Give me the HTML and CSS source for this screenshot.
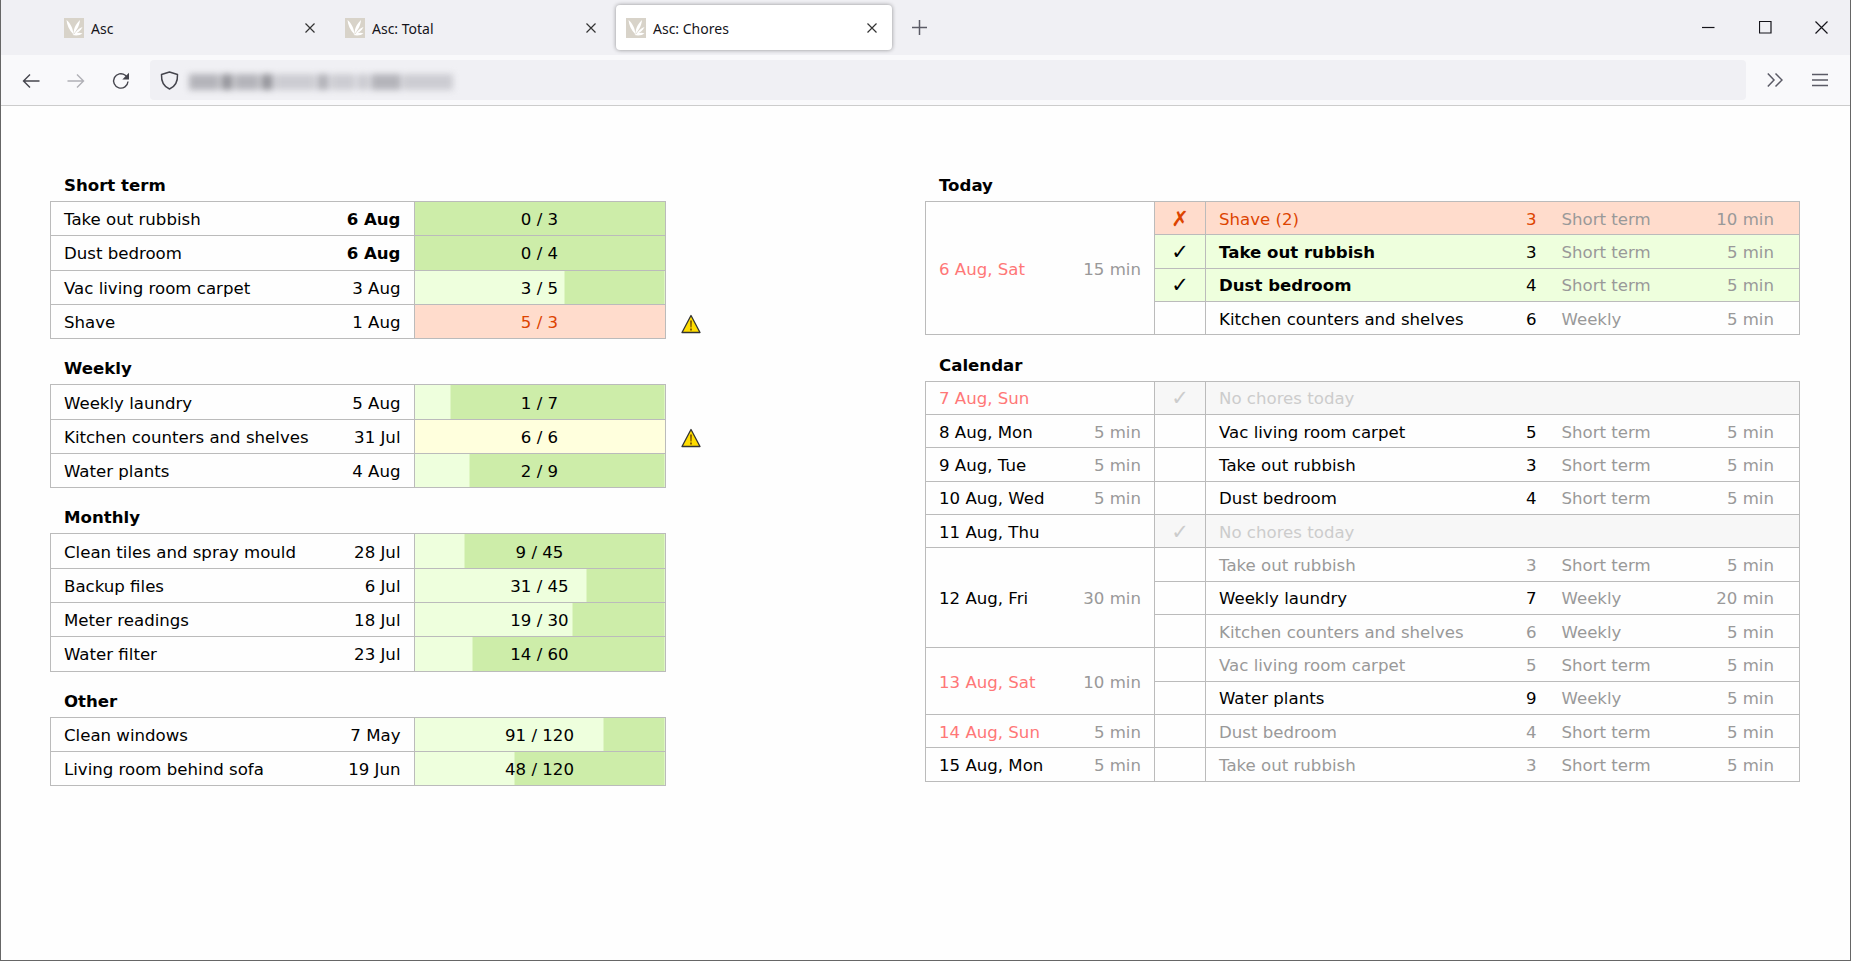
FILE: index.html
```html
<!DOCTYPE html>
<html lang="en">
<head>
  <meta charset="UTF-8" />
  <title>Asc: Chores</title>
  <link rel="stylesheet" href="styles.css">
</head>
<body>
  <svg class="defs" width="0" height="0">
    <symbol id="leaf" viewBox="0 0 20 20">
      <rect width="20" height="20" fill="#d8d3c9"/>
      <path d="M2.500 2c.5 5 2.500 10 7 14.500C9 10 6.500 5.500 2.500 2zM16 2c-3 3-6.500 7-6.500 14 3-3.500 6-8 6.500-14zM18.500 9c-3 1-6.500 4-8.500 7.500 3.500-1.500 7-4 8.500-7.500zM18.500 15.500c-3-1.500-7-.5-10 1.500 3.500 1 7.500.5 10-1.500z" fill="#fff"/>
    </symbol>
    <symbol id="warn" viewBox="0 0 20 20">
      <path d="M10 1.500 19 18.500H1z" fill="#fd0" stroke="#333" stroke-width="1.3" stroke-linejoin="round"/>
      <path d="M9.100 6.500h1.800l-.3 7h-1.200zM9.100 14.500h1.800v2H9.100z" fill="#7a5200"/>
    </symbol>
  </svg>

  <div class="window">
    <div class="tabbar">
      <div class="tab">
        <svg class="favicon"><use href="#leaf"/></svg>
        <span class="tab-title">Asc</span>
        <svg class="tab-close" viewBox="0 0 10 10"><path d="M.5.5l9 9M9.500.5l-9 9"/></svg>
      </div>
      <div class="tab">
        <svg class="favicon"><use href="#leaf"/></svg>
        <span class="tab-title">Asc: Total</span>
        <svg class="tab-close" viewBox="0 0 10 10"><path d="M.5.5l9 9M9.500.5l-9 9"/></svg>
      </div>
      <div class="tab active">
        <svg class="favicon"><use href="#leaf"/></svg>
        <span class="tab-title">Asc: Chores</span>
        <svg class="tab-close" viewBox="0 0 10 10"><path d="M.5.5l9 9M9.500.5l-9 9"/></svg>
      </div>
      <svg class="new-tab" viewBox="0 0 15 15"><path d="M7.500 0v15M0 7.500h15"/></svg>
      <div class="win-buttons">
        <svg class="win-btn" viewBox="0 0 13 13"><path d="M0 6.500h12.500"/></svg>
        <svg class="win-btn" viewBox="0 0 13 13"><path d="M.5.5h11.500v11.500H.5z"/></svg>
        <svg class="win-btn" viewBox="0 0 13 13"><path d="M.5.5l12 12M12.500.5l-12 12"/></svg>
      </div>
    </div>

    <div class="toolbar">
      <svg class="nav-icon" viewBox="0 0 18 18"><path d="M17.500 9H1.500M8 2.500 1.500 9 8 15.500"/></svg>
      <svg class="nav-icon dim" viewBox="0 0 18 18"><path d="M.5 9h16M10 2.500 16.500 9 10 15.500"/></svg>
      <svg class="nav-icon" viewBox="0 0 18 18"><path d="M16 9.500A7.200 7.200 0 1 1 13.300 3.300L15.500 5.500"/><path class="fill" d="M17 .8v6.700h-6.700z"/></svg>
      <div class="urlbar">
        <svg class="shield" viewBox="0 0 19 19"><path d="M9.500 1 17.500 3.500C17.800 10 15.500 15.500 9.500 18 3.500 15.500 1.200 10 1.500 3.500z"/></svg>
        <div class="url-blur">
          <i class="w30"></i><i class="w12 dark"></i><i class="w24"></i><i class="w12 dark"></i><i class="w40 lite"></i><i class="w12"></i><i class="w24 lite"></i><i class="w12 lite"></i><i class="w30"></i><i class="w50 lite"></i>
        </div>
      </div>
      <svg class="tool-icon" viewBox="0 0 16 16"><path d="M.8 1.500 7 8 .8 14.500M8.500 1.500 15 8 8.500 14.500"/></svg>
      <svg class="tool-icon menu" viewBox="0 0 16 14"><path d="M0 1.500h16M0 7h16M0 12.500h16"/></svg>
    </div>

    <main class="page">
      <section class="left-col">
        <h2>Short term</h2>
        <table class="chores">
          <colgroup><col class="c-name"><col class="c-date"><col class="c-bar"><col class="c-warn"></colgroup>
          <tr><td class="name">Take out rubbish</td><td class="date due">6 Aug</td><td class="bar" style="--done:0%">0 / 3</td><td class="warn"></td></tr>
          <tr><td class="name">Dust bedroom</td><td class="date due">6 Aug</td><td class="bar" style="--done:0%">0 / 4</td><td class="warn"></td></tr>
          <tr><td class="name">Vac living room carpet</td><td class="date">3 Aug</td><td class="bar" style="--done:60%">3 / 5</td><td class="warn"></td></tr>
          <tr><td class="name">Shave</td><td class="date">1 Aug</td><td class="bar over">5 / 3</td><td class="warn"><svg class="warn-icon"><use href="#warn"/></svg></td></tr>
        </table>

        <h2>Weekly</h2>
        <table class="chores">
          <colgroup><col class="c-name"><col class="c-date"><col class="c-bar"><col class="c-warn"></colgroup>
          <tr><td class="name">Weekly laundry</td><td class="date">5 Aug</td><td class="bar" style="--done:14.3%">1 / 7</td><td class="warn"></td></tr>
          <tr><td class="name">Kitchen counters and shelves</td><td class="date">31 Jul</td><td class="bar full">6 / 6</td><td class="warn"><svg class="warn-icon"><use href="#warn"/></svg></td></tr>
          <tr><td class="name">Water plants</td><td class="date">4 Aug</td><td class="bar" style="--done:22.2%">2 / 9</td><td class="warn"></td></tr>
        </table>

        <h2>Monthly</h2>
        <table class="chores">
          <colgroup><col class="c-name"><col class="c-date"><col class="c-bar"><col class="c-warn"></colgroup>
          <tr><td class="name">Clean tiles and spray mould</td><td class="date">28 Jul</td><td class="bar" style="--done:20%">9 / 45</td><td class="warn"></td></tr>
          <tr><td class="name">Backup files</td><td class="date">6 Jul</td><td class="bar" style="--done:68.9%">31 / 45</td><td class="warn"></td></tr>
          <tr><td class="name">Meter readings</td><td class="date">18 Jul</td><td class="bar" style="--done:63.3%">19 / 30</td><td class="warn"></td></tr>
          <tr><td class="name">Water filter</td><td class="date">23 Jul</td><td class="bar" style="--done:23.3%">14 / 60</td><td class="warn"></td></tr>
        </table>

        <h2>Other</h2>
        <table class="chores">
          <colgroup><col class="c-name"><col class="c-date"><col class="c-bar"><col class="c-warn"></colgroup>
          <tr><td class="name">Clean windows</td><td class="date">7 May</td><td class="bar" style="--done:75.8%">91 / 120</td><td class="warn"></td></tr>
          <tr><td class="name">Living room behind sofa</td><td class="date">19 Jun</td><td class="bar" style="--done:40%">48 / 120</td><td class="warn"></td></tr>
        </table>
      </section>

      <section class="right-col">
        <h2>Today</h2>
        <table class="plan">
          <colgroup><col class="p-day"><col class="p-total"><col class="p-check"><col class="p-name"><col class="p-num"><col class="p-term"><col class="p-min"></colgroup>
          <tr class="late"><td class="day weekend" rowspan="4">6 Aug, Sat</td><td class="total" rowspan="4">15 min</td><td class="check">✗</td><td class="task">Shave (2)</td><td class="num">3</td><td class="term">Short term</td><td class="min">10 min</td></tr>
          <tr class="done"><td class="check">✓</td><td class="task">Take out rubbish</td><td class="num">3</td><td class="term">Short term</td><td class="min">5 min</td></tr>
          <tr class="done"><td class="check">✓</td><td class="task">Dust bedroom</td><td class="num">4</td><td class="term">Short term</td><td class="min">5 min</td></tr>
          <tr><td class="check"></td><td class="task">Kitchen counters and shelves</td><td class="num">6</td><td class="term">Weekly</td><td class="min">5 min</td></tr>
        </table>

        <h2>Calendar</h2>
        <table class="plan">
          <colgroup><col class="p-day"><col class="p-total"><col class="p-check"><col class="p-name"><col class="p-num"><col class="p-term"><col class="p-min"></colgroup>
          <tr class="free"><td class="day weekend">7 Aug, Sun</td><td class="total"></td><td class="check">✓</td><td class="task" colspan="4">No chores today</td></tr>
          <tr><td class="day">8 Aug, Mon</td><td class="total">5 min</td><td class="check"></td><td class="task">Vac living room carpet</td><td class="num">5</td><td class="term">Short term</td><td class="min">5 min</td></tr>
          <tr><td class="day">9 Aug, Tue</td><td class="total">5 min</td><td class="check"></td><td class="task">Take out rubbish</td><td class="num">3</td><td class="term">Short term</td><td class="min">5 min</td></tr>
          <tr><td class="day">10 Aug, Wed</td><td class="total">5 min</td><td class="check"></td><td class="task">Dust bedroom</td><td class="num">4</td><td class="term">Short term</td><td class="min">5 min</td></tr>
          <tr class="free"><td class="day">11 Aug, Thu</td><td class="total"></td><td class="check">✓</td><td class="task" colspan="4">No chores today</td></tr>
          <tr class="faded"><td class="day" rowspan="3">12 Aug, Fri</td><td class="total" rowspan="3">30 min</td><td class="check"></td><td class="task">Take out rubbish</td><td class="num">3</td><td class="term">Short term</td><td class="min">5 min</td></tr>
          <tr><td class="check"></td><td class="task">Weekly laundry</td><td class="num">7</td><td class="term">Weekly</td><td class="min">20 min</td></tr>
          <tr class="faded"><td class="check"></td><td class="task">Kitchen counters and shelves</td><td class="num">6</td><td class="term">Weekly</td><td class="min">5 min</td></tr>
          <tr class="faded"><td class="day weekend" rowspan="2">13 Aug, Sat</td><td class="total" rowspan="2">10 min</td><td class="check"></td><td class="task">Vac living room carpet</td><td class="num">5</td><td class="term">Short term</td><td class="min">5 min</td></tr>
          <tr><td class="check"></td><td class="task">Water plants</td><td class="num">9</td><td class="term">Weekly</td><td class="min">5 min</td></tr>
          <tr class="faded"><td class="day weekend">14 Aug, Sun</td><td class="total">5 min</td><td class="check"></td><td class="task">Dust bedroom</td><td class="num">4</td><td class="term">Short term</td><td class="min">5 min</td></tr>
          <tr class="faded"><td class="day">15 Aug, Mon</td><td class="total">5 min</td><td class="check"></td><td class="task">Take out rubbish</td><td class="num">3</td><td class="term">Short term</td><td class="min">5 min</td></tr>
        </table>
      </section>
    </main>
  </div>
</body>
</html>
```

FILE: styles.css
```css
* {
  box-sizing: border-box;
}
html, body {
  margin: 0;
  padding: 0;
}
body {
  font-family: "DejaVu Sans", Verdana, sans-serif;
  font-size: 16.6px;
  color: #000;
  background: #fefefe;
}
.defs {
  position: absolute;
}
.window {
  height: 961px;
  overflow: hidden;
  border: 1px solid #666;
  border-top: none;
}

/* browser chrome */
.tabbar {
  height: 55px;
  padding: 5px 0 5px 53px;
  display: flex;
  align-items: stretch;
  gap: 4px;
  background: #f0f0f4;
  font-family: "Noto Sans", sans-serif;
  font-size: 14px;
  color: #15141a;
}
.tab {
  width: 277px;
  padding: 0 16px 0 10px;
  display: flex;
  align-items: center;
  border-radius: 4px;
}
.tab.active {
  width: 276px;
  padding-right: 15px;
  background: #fff;
  box-shadow: 0 0 4px rgba(0, 0, 0, .4);
}
.favicon {
  width: 20px;
  height: 20px;
  margin-top: 1px;
  margin-right: 7px;
}
.tab-title {
  flex: 1;
  padding-top: 1px;
}
.tab-close {
  width: 10px;
  height: 10px;
  fill: none;
  stroke: #333;
  stroke-width: 1.2;
}
.new-tab {
  width: 15px;
  height: 15px;
  margin: 15px 0 0 16px;
  fill: none;
  stroke: #5b5b66;
  stroke-width: 1.5;
}
.win-buttons {
  margin-left: auto;
  padding: 16px 22px 0 0;
  display: flex;
  gap: 43.5px;
}
.win-btn {
  width: 13px;
  height: 13px;
  fill: none;
  stroke: #15141a;
  stroke-width: 1.2;
}
.toolbar {
  height: 51px;
  padding: 5px 0 5px 21px;
  display: flex;
  align-items: center;
  background: #f9f9fb;
  border-bottom: 1px solid #ccc;
}
.nav-icon {
  width: 18px;
  height: 18px;
  margin-top: 1px;
  margin-right: 27px;
  fill: none;
  stroke: #45454d;
  stroke-width: 1.4;
}
.nav-icon.dim {
  stroke: #b0b0b6;
}
.nav-icon .fill {
  fill: #45454d;
  stroke: none;
}
.urlbar {
  width: 1596px;
  height: 40px;
  margin-left: -7px;
  padding-left: 10px;
  display: flex;
  align-items: center;
  background: #f0f0f4;
  border-radius: 4px;
}
.shield {
  width: 19px;
  height: 19px;
  fill: none;
  stroke: #45454d;
  stroke-width: 1.5;
  stroke-linejoin: round;
}
.url-blur {
  height: 16px;
  margin: 3px 0 0 10px;
  display: flex;
  gap: 2px;
  filter: blur(3px);
}
.url-blur i {
  height: 16px;
  background: #b4b4ba;
}
.url-blur i.dark {
  background: #98989e;
}
.url-blur i.lite {
  background: #ccccd2;
}
.w12 { width: 12px; }
.w24 { width: 24px; }
.w30 { width: 30px; }
.w40 { width: 40px; }
.w50 { width: 50px; }
.tool-icon {
  width: 16px;
  height: 16px;
  margin-left: 21px;
  fill: none;
  stroke: #5b5b66;
  stroke-width: 1.5;
}
.tool-icon.menu {
  height: 14px;
  margin-left: 29px;
}

/* page */
.page {
  padding: 65px 50px 0 49px;
  display: flex;
  justify-content: space-between;
}
.left-col {
  width: 660px;
}
.right-col {
  width: 875px;
}
h2 {
  height: 30px;
  margin: 15.5px 0 0;
  padding: 1px 0 0 14px;
  font-size: 16.6px;
  line-height: 28px;
  font-weight: bold;
}
.left-col h2 {
  margin-top: 15.2px;
}
section h2:first-child {
  margin-top: 0;
}
table {
  border-collapse: collapse;
  table-layout: fixed;
}
td {
  padding: 2px 0 0;
  border: 1px solid #bbb;
  white-space: nowrap;
}

/* left tables */
.chores {
  width: 660px;
}
.chores tr {
  height: 34.3px;
}
.c-name { width: 287px; }
.c-date { width: 76.5px; }
.c-bar { width: 251px; }
.name {
  padding-left: 13px;
  border-right: none;
}
.date {
  padding-right: 13px;
  text-align: right;
  border-left: none;
}
.date.due {
  font-weight: bold;
}
.bar {
  text-align: center;
  background: linear-gradient(90deg, #eeffdd var(--done), #cdeda9 0);
}
.bar.over {
  color: #d40;
  background: #ffdccc;
}
.bar.full {
  background: #ffffdd;
}
.warn {
  padding: 4px 0 0 15px;
  border: none;
  line-height: 0;
}
.warn-icon {
  width: 20px;
  height: 20px;
}

/* right tables */
.plan {
  width: 875px;
}
.plan tr {
  height: 33.33px;
}
.p-day { width: 130px; }
.p-total { width: 99px; }
.p-check { width: 51px; }
.p-name { width: 305px; }
.p-num { width: 26px; }
.p-term { width: 125px; }
.plan .day {
  padding-left: 13px;
  border-right: none;
}
.plan .day.weekend {
  color: #f77;
}
.plan .total {
  padding-right: 13px;
  text-align: right;
  color: #999;
  border-left: none;
}
.check {
  text-align: center;
  font-size: 21px;
  line-height: 1;
}
.task {
  padding-left: 13px;
  border-right: none;
}
.num {
  text-align: right;
  border-left: none;
  border-right: none;
}
.term {
  padding-left: 25px;
  color: #999;
  border-left: none;
  border-right: none;
}
.min {
  padding-right: 25px;
  text-align: right;
  color: #999;
  border-left: none;
}
.late .check, .late .task, .late .num, .late .term, .late .min {
  background: #ffdccc;
}
.late .check, .late .task, .late .num {
  color: #d40;
}
.late .check {
  font-weight: bold;
}
.done .check, .done .task, .done .num, .done .term, .done .min {
  background: #eeffdd;
}
.done .task {
  font-weight: bold;
}
.free .check, .free .task {
  color: #ccc;
  background: #f7f7f7;
}
.free .task {
  border-right: 1px solid #bbb;
}
.faded .task, .faded .num {
  color: #999;
}
```
